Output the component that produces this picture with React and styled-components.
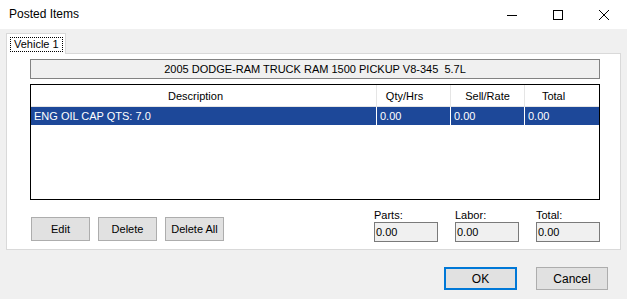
import React from "react";
import styled, { createGlobalStyle } from "styled-components";

const GlobalStyle = createGlobalStyle`
  html, body {
    margin: 0;
    padding: 0;
    background: #f0f0f0;
  }
`;

const Window = styled.div`
  width: 627px;
  height: 299px;
  display: flex;
  flex-direction: column;
  background: #f0f0f0;
  font-family: "Liberation Sans", Arial, sans-serif;
  font-size: 11px;
  color: #000;
  overflow: hidden;
`;

const TitleBar = styled.div`
  height: 29px;
  background: #fff;
  display: flex;
  align-items: center;
`;

const Title = styled.div`
  flex: 1;
  padding-left: 9px;
  font-size: 12px;
  padding-bottom: 2px;
`;

const CaptionButton = styled.div`
  width: 46px;
  height: 29px;
  display: flex;
  align-items: center;
  justify-content: center;
`;

const Body = styled.div`
  padding: 4px 6px 0 6px;
  display: flex;
  flex-direction: column;
`;

const TabStrip = styled.div`
  display: flex;
  height: 21px;
  position: relative;
  z-index: 1;
  margin-bottom: -1px;
`;

const Tab = styled.div`
  width: 60px;
  height: 21px;
  box-sizing: border-box;
  background: #fff;
  border: 1px solid #d9d9d9;
  border-bottom: none;
  display: flex;
  align-items: center;
  padding: 0 0 0 3px;
`;

const TabLabel = styled.span`
  border: 1px dotted #000;
  padding: 0 3px;
  line-height: 13px;
  margin-top: 1px;
`;

const Panel = styled.div`
  height: 197px;
  box-sizing: border-box;
  background: #fff;
  border: 1px solid #d9d9d9;
  padding: 5px 0 0 23px;
  display: flex;
  flex-direction: column;
`;

const VehicleBar = styled.div`
  width: 570px;
  height: 20px;
  box-sizing: border-box;
  background: #f0f0f0;
  border: 1px solid #828282;
  display: flex;
  align-items: center;
  justify-content: center;
  white-space: pre;
`;

const List = styled.div`
  margin-top: 5px;
  width: 570px;
  height: 116px;
  box-sizing: border-box;
  border: 1px solid #000;
  background: #fff;
`;

const Row = styled.div`
  display: grid;
  grid-template-columns: 345px 74px 74px 74px;
  height: ${(p) => (p.$header ? "21px" : "18px")};
  background: ${(p) => (p.$selected ? "#1d4899" : "#fff")};
  color: ${(p) => (p.$selected ? "#fff" : "#000")};
  border-bottom: ${(p) => (p.$header ? "1px solid #e5e5e5" : "none")};
`;

const HeadCell = styled.div`
  display: flex;
  align-items: center;
  justify-content: center;
  padding-right: ${(p) => p.$shift || 0}px;
  border-left: ${(p) => (p.$first ? "none" : "1px solid #e5e5e5")};
`;

const Cell = styled.div`
  display: flex;
  align-items: center;
  padding-left: 3px;
  border-left: ${(p) => (p.$first ? "none" : "1px solid #fff")};
`;

const BottomRow = styled.div`
  display: flex;
  width: 570px;
`;

const ActionButtons = styled.div`
  display: flex;
  gap: 8px;
  margin: 17px 0 0 1px;
  align-self: flex-start;
`;

const Button = styled.div`
  width: 59px;
  height: 24px;
  box-sizing: border-box;
  background: #e1e1e1;
  border: 1px solid #adadad;
  display: flex;
  align-items: center;
  justify-content: center;
`;

const Totals = styled.div`
  margin-left: auto;
  margin-top: 9px;
  display: flex;
  gap: 17px;
`;

const TotalGroup = styled.div`
  display: flex;
  flex-direction: column;
`;

const TotalLabel = styled.div`
  line-height: 13px;
`;

const TotalBox = styled.div`
  width: 64px;
  height: 20px;
  box-sizing: border-box;
  background: #f0f0f0;
  border: 1px solid #7a7a7a;
  display: flex;
  align-items: center;
  padding-left: 1px;
`;

const Footer = styled.div`
  display: flex;
  justify-content: flex-end;
  gap: 19px;
  padding: 17px 13px 0 0;
`;

const DialogButton = styled.div`
  width: ${(p) => p.$w}px;
  height: 23px;
  box-sizing: border-box;
  background: #e1e1e1;
  border: ${(p) => (p.$default ? "2px solid #0078d7" : "1px solid #adadad")};
  display: flex;
  align-items: center;
  justify-content: center;
  font-size: 12px;
`;

const columns = [
  { label: "Description", shift: 16 },
  { label: "Qty/Hrs", shift: 18 },
  { label: "Sell/Rate", shift: 0 },
  { label: "Total", shift: 16 },
];

const item = ["ENG OIL CAP QTS: 7.0", "0.00", "0.00", "0.00"];

export default function App() {
  return (
    <Window>
      <GlobalStyle />
      <TitleBar>
        <Title>Posted Items</Title>
        <CaptionButton>
          <svg width="10" height="10" viewBox="0 0 10 10">
            <line x1="0" y1="5.5" x2="10" y2="5.5" stroke="#000" strokeWidth="1" />
          </svg>
        </CaptionButton>
        <CaptionButton>
          <svg width="10" height="10" viewBox="0 0 10 10">
            <rect x="0.5" y="0.5" width="9" height="9" fill="none" stroke="#000" strokeWidth="1" />
          </svg>
        </CaptionButton>
        <CaptionButton>
          <svg width="10" height="10" viewBox="0 0 10 10">
            <path d="M0 0 L10 10 M10 0 L0 10" stroke="#000" strokeWidth="1" />
          </svg>
        </CaptionButton>
      </TitleBar>
      <Body>
        <TabStrip>
          <Tab>
            <TabLabel>Vehicle 1</TabLabel>
          </Tab>
        </TabStrip>
        <Panel>
          <VehicleBar>2005 DODGE-RAM TRUCK RAM 1500 PICKUP V8-345  5.7L</VehicleBar>
          <List>
            <Row $header>
              {columns.map((c, i) => (
                <HeadCell key={c.label} $first={i === 0} $shift={c.shift}>
                  {c.label}
                </HeadCell>
              ))}
            </Row>
            <Row $selected>
              {item.map((v, i) => (
                <Cell key={i} $first={i === 0}>
                  {v}
                </Cell>
              ))}
            </Row>
          </List>
          <BottomRow>
            <ActionButtons>
              <Button>Edit</Button>
              <Button>Delete</Button>
              <Button>Delete All</Button>
            </ActionButtons>
            <Totals>
              {["Parts:", "Labor:", "Total:"].map((l) => (
                <TotalGroup key={l}>
                  <TotalLabel>{l}</TotalLabel>
                  <TotalBox>0.00</TotalBox>
                </TotalGroup>
              ))}
            </Totals>
          </BottomRow>
        </Panel>
        <Footer>
          <DialogButton $default $w={73}>OK</DialogButton>
          <DialogButton $w={72}>Cancel</DialogButton>
        </Footer>
      </Body>
    </Window>
  );
}
